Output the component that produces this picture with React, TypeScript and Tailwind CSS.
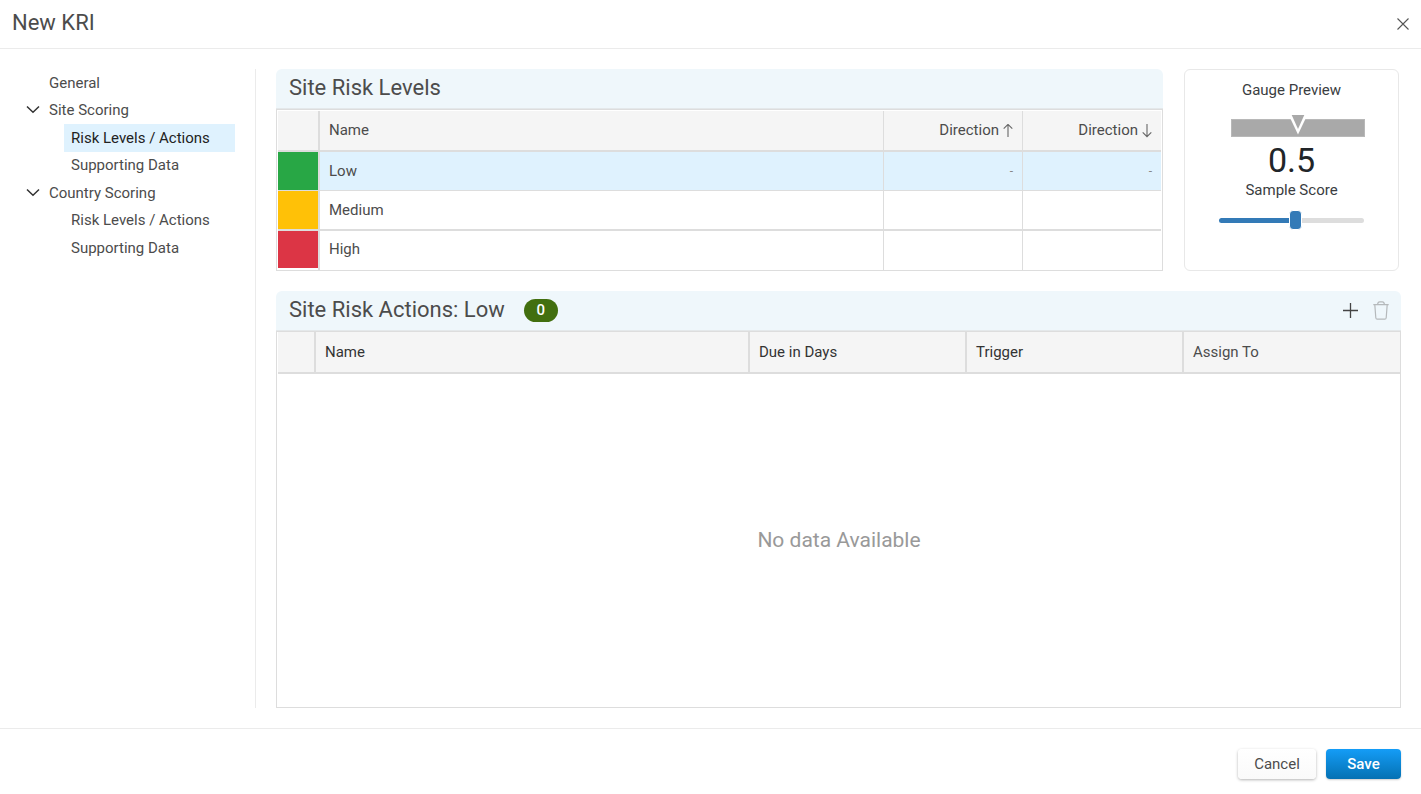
import React, { useState } from 'react';

interface RiskLevel {
  name: string;
  swatch: string;
  rowHeight: string;
  line: string;
}

interface NavGroup {
  label: string;
  children: string[];
}

const riskLevels: RiskLevel[] = [
  { name: 'Low', swatch: 'bg-[#28a745]', rowHeight: 'h-[39px]', line: 'border-b' },
  { name: 'Medium', swatch: 'bg-[#ffc107]', rowHeight: 'h-10', line: 'border-b-2' },
  { name: 'High', swatch: 'bg-[#dc3545]', rowHeight: 'h-[39px]', line: 'pb-0.5' },
];

const navGroups: NavGroup[] = [
  { label: 'Site Scoring', children: ['Risk Levels / Actions', 'Supporting Data'] },
  { label: 'Country Scoring', children: ['Risk Levels / Actions', 'Supporting Data'] },
];

const ChevronIcon = () => (
  <svg width="14" height="14" viewBox="0 0 14 14" fill="none" stroke="#333" strokeWidth="1.5" aria-hidden="true">
    <path d="M1 3.500 7 9.300 13 3.500" />
  </svg>
);

const ArrowIcon = ({ down = false }: { down?: boolean }) => (
  <svg width="10" height="14" viewBox="0 0 10 14" fill="none" stroke="#666" strokeWidth="1.1" aria-hidden="true">
    {down ? <path d="M5 0v12.600M.7 8.400 5 12.700l4.300-4.300" /> : <path d="M5 13V.4M.7 4.600 5 .4l4.300 4.200" />}
  </svg>
);

const Sidebar = () => {
  const [active, setActive] = useState('Site Scoring/Risk Levels / Actions');

  return (
    <nav className="w-64 shrink-0 border-r border-[#ebebeb] pr-5">
      <div className="grid h-[193px] auto-rows-fr">
        <a href="#general" className="flex items-center pl-[49px]">General</a>
        {navGroups.map(group => (
          <React.Fragment key={group.label}>
            <div className="flex items-center gap-[9px] pl-[26px]">
              <button type="button" aria-label={`Toggle ${group.label}`}><ChevronIcon /></button>
              <a href="#group">{group.label}</a>
            </div>
            {group.children.map(child => {
              const id = `${group.label}/${child}`;
              return (
                <a
                  key={id}
                  href="#item"
                  onClick={() => setActive(id)}
                  className={`ml-16 flex items-center pl-[7px] ${active === id ? 'bg-[#dff2fe] text-[#222]' : ''}`}
                >
                  {child}
                </a>
              );
            })}
          </React.Fragment>
        ))}
      </div>
    </nav>
  );
};

const GaugePreview = () => {
  const [score, setScore] = useState(0.53);

  return (
    <section className="mr-0.5 flex w-[215px] shrink-0 flex-col items-center rounded-md border border-[#e8e8e8] pt-[10px] text-[#3a3d41]">
      <h2 className="leading-5">Gauge Preview</h2>
      <svg className="mt-[14px] ml-3" width="134" height="23" viewBox="0 0 134 23" aria-hidden="true">
        <rect x=".5" y="5.500" width="133" height="17" fill="#a9a9a9" stroke="#b8b8b8" />
        <path d="M57.700 1h18.600L67 20.500z" fill="#fff" />
        <path d="M60.700 1h12.600L67 15z" fill="#a9a9a9" />
      </svg>
      <output className="mt-1 text-[34px] leading-[38px] text-[#212529]">{score.toFixed(1)}</output>
      <label htmlFor="sampleScore" className="mt-px leading-5">Sample Score</label>
      <input
        type="range"
        id="sampleScore"
        min="0"
        max="1"
        step="0.01"
        value={score}
        onChange={e => setScore(Number(e.target.value))}
        style={{ '--fill': `${score * 100}%` } as React.CSSProperties}
        className="mt-[10px] h-5 w-[145px] appearance-none bg-transparent [&::-webkit-slider-runnable-track]:h-[5px] [&::-webkit-slider-runnable-track]:rounded-full [&::-webkit-slider-runnable-track]:bg-[linear-gradient(to_right,#337ab7_var(--fill),#ddd_var(--fill))] [&::-webkit-slider-thumb]:-mt-[8px] [&::-webkit-slider-thumb]:h-5 [&::-webkit-slider-thumb]:w-[13px] [&::-webkit-slider-thumb]:appearance-none [&::-webkit-slider-thumb]:rounded [&::-webkit-slider-thumb]:border [&::-webkit-slider-thumb]:border-white [&::-webkit-slider-thumb]:bg-[#337ab7]"
      />
    </section>
  );
};

const App = () => {
  const [selected, setSelected] = useState('Low');

  return (
    <div className="flex min-h-screen flex-col bg-white font-['Roboto',sans-serif] text-[15px] text-[#4c4c4c]">
      <header className="flex h-[49px] items-center justify-between border-b border-[#ebebeb] pr-3 pb-1 pl-3">
        <h1 className="text-[22px]">New KRI</h1>
        <button type="button" aria-label="Close" className="pt-1">
          <svg width="12" height="12" viewBox="0 0 12 12" fill="none" stroke="#555" strokeWidth="1.100" aria-hidden="true">
            <path d="m.5.5 11 11M11.500.5l-11 11" />
          </svg>
        </button>
      </header>

      <div className="flex flex-1 gap-5 py-5 pr-5">
        <Sidebar />

        <main className="flex min-w-0 flex-1 flex-col gap-5">
          <div className="flex gap-[21px]">
            <section className="min-w-0 flex-1">
              <div className="flex h-10 items-center rounded-t-md border-b border-[#e4e8ea] bg-[#eff7fb] pr-3 pb-px pl-[13px]">
                <h2 className="text-[22px] leading-7">Site Risk Levels</h2>
              </div>
              <div className="border border-[#ddd] p-px pb-0">
                <table className="w-full table-fixed border-separate border-spacing-0">
                  <thead>
                    <tr className="h-[41px] bg-[#f5f5f5] *:border-b-2 *:border-[#ddd] *:px-[9px] *:font-normal">
                      <th className="w-[42px] border-r-2"></th>
                      <th className="border-r text-left">Name</th>
                      <th className="w-[139px] border-r">
                        <span className="flex items-center justify-end gap-1">Direction <ArrowIcon /></span>
                      </th>
                      <th className="w-[138px]">
                        <span className="flex items-center justify-end gap-1">Direction <ArrowIcon down /></span>
                      </th>
                    </tr>
                  </thead>
                  <tbody>
                    {riskLevels.map(level => {
                      const isSelected = level.name === selected;
                      const cell = `border-[#ddd] px-[9px] ${level.line}`;
                      return (
                        <tr
                          key={level.name}
                          onClick={() => setSelected(level.name)}
                          className={`${level.rowHeight} ${isSelected ? 'bg-[#dff2fe]' : ''}`}
                        >
                          <td className={`border-r-2 border-[#ddd] p-0 align-top ${level.line}`}>
                            <div className={`${level.name === 'High' ? 'h-[37px]' : 'h-[38px]'} ${level.swatch}`}></div>
                          </td>
                          <td className={`border-r ${cell}`}>{level.name}</td>
                          <td className={`border-r text-right text-xs text-[#888] ${cell}`}>{isSelected && '-'}</td>
                          <td className={`text-right text-xs text-[#888] ${cell}`}>{isSelected && '-'}</td>
                        </tr>
                      );
                    })}
                  </tbody>
                </table>
              </div>
            </section>

            <GaugePreview />
          </div>

          <section className="flex flex-1 flex-col">
            <div className="flex h-10 items-center rounded-t-md border-b border-[#e4e8ea] bg-[#eff7fb] pr-3 pb-px pl-[13px]">
              <h2 className="text-[22px] leading-7">Site Risk Actions: {selected}</h2>
              <span className="ml-[19px] flex h-[23px] w-[34px] items-center justify-center rounded-full bg-[#426f0f] font-medium text-white">0</span>
              <div className="ml-auto flex items-center gap-[15px]">
                <button type="button" aria-label="Add action">
                  <svg width="16" height="16" viewBox="0 0 16 16" fill="none" stroke="#444" strokeWidth="1.300" aria-hidden="true">
                    <path d="M8.500 1v15M1 8.500h15" />
                  </svg>
                </button>
                <button type="button" aria-label="Delete action" disabled>
                  <svg width="16" height="19" viewBox="0 0 16 19" fill="none" stroke="#b5b9bb" strokeWidth="1.200" aria-hidden="true">
                    <path d="M.3 3.600h15.400M4.600 3.400c.2-1.800.9-2.600 2-2.600h2.800c1.100 0 1.800.8 2 2.600M1.800 3.600l1 13.200c.1.900.6 1.400 1.400 1.400h7.600c.8 0 1.300-.5 1.400-1.400l1-13.200" />
                  </svg>
                </button>
              </div>
            </div>
            <div className="flex flex-1 flex-col border border-[#ddd] pl-px">
              <table className="w-full table-fixed border-separate border-spacing-0">
                <thead>
                  <tr className="h-[42px] bg-[#f5f5f5] text-left text-[#333] *:border-b-2 *:border-[#ddd] *:px-[9px] *:font-normal">
                    <th className="w-[38px] border-r-2"></th>
                    <th className="border-r-2">Name</th>
                    <th className="w-[217px] border-r-2">Due in Days</th>
                    <th className="w-[217px] border-r-2">Trigger</th>
                    <th className="w-[216px] text-[#4c4c4c]">Assign To</th>
                  </tr>
                </thead>
              </table>
              <p className="flex flex-1 items-center justify-center text-[21px] text-[#999]">No data Available</p>
            </div>
          </section>
        </main>
      </div>

      <footer className="flex h-[66px] items-start justify-end gap-[10px] border-t border-[#ebebeb] px-5 pt-5">
        <button type="button" className="h-[30px] w-[78px] rounded bg-linear-to-b from-white to-[#fafafa] shadow-[0_1px_3px_rgba(0,0,0,0.3)]">
          Cancel
        </button>
        <button type="button" className="h-[30px] w-[75px] rounded bg-linear-to-b from-[#149df7] to-[#0571b3] font-medium text-white shadow-[0_1px_2px_rgba(0,0,0,0.2)]">
          Save
        </button>
      </footer>
    </div>
  );
};

export default App;
